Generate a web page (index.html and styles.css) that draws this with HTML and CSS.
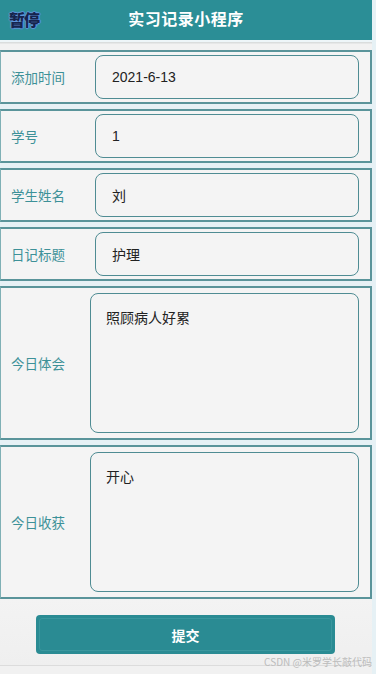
FILE: index.html
```html
<!DOCTYPE html>
<html lang="zh">
<head>
<meta charset="utf-8">
<title>实习记录小程序</title>
<link rel="stylesheet" href="styles.css">
</head>
<body>
<div class="app">
  <header class="header">
    <span class="pause">暂停</span>
    <h1 class="title">实习记录小程序</h1>
  </header>
  <div class="subbar"></div>
  <form class="form">
    <div class="row">
      <label class="label">添加时间</label>
      <div class="field">2021-6-13</div>
    </div>
    <div class="row">
      <label class="label">学号</label>
      <div class="field">1</div>
    </div>
    <div class="row">
      <label class="label">学生姓名</label>
      <div class="field">刘</div>
    </div>
    <div class="row">
      <label class="label">日记标题</label>
      <div class="field">护理</div>
    </div>
    <div class="row row-tall">
      <label class="label">今日体会</label>
      <div class="area">照顾病人好累</div>
    </div>
    <div class="row row-tall">
      <label class="label">今日收获</label>
      <div class="area">开心</div>
    </div>
    <div class="actions">
      <button type="button" class="submit"><span class="submit-inner">提交</span></button>
    </div>
  </form>
  <div class="footer">
    <span class="watermark">CSDN @米罗学长敲代码</span>
  </div>
</div>
</body>
</html>
```
FILE: styles.css
```css
html, body {
  margin: 0;
  padding: 0;
}
body {
  background: #e6f1f5;
  font-family: "Liberation Sans", "Noto Sans CJK SC", sans-serif;
  font-size: 14px;
  color: #222;
  width: 376px;
  height: 674px;
  overflow: hidden;
}
.app {
  width: 372px;
  display: flex;
  flex-direction: column;
}
.header {
  position: relative;
  height: 40px;
  background: #2b8e96;
  display: flex;
  align-items: center;
  justify-content: center;
}
.title {
  margin: 0 0 4px 0;
  font-family: "Noto Sans CJK SC", sans-serif;
  font-size: 16px;
  font-weight: 700;
  color: #fff;
  letter-spacing: 0.5px;
}
.pause {
  position: absolute;
  left: 9px;
  top: 7px;
  font-family: "Noto Sans CJK SC", sans-serif;
  font-size: 16px;
  font-weight: 900;
  color: #16244d;
  letter-spacing: -1px;
  text-shadow: 1px 0 1px #5f95de, -1px 0 1px #5f95de, 0 1px 1px #5f95de, 0 -1px 1px #5f95de;
}
.subbar {
  height: 8px;
  border-top: 2px solid #eef6f9;
  background: linear-gradient(#dadddd 0, #dadddd 1px, #f2f2f2 2px);
  background-color: #f2f2f2;
  margin: 0;
}
.form {
  display: flex;
  flex-direction: column;
  gap: 5px;
  margin: 0;
}
.row {
  box-sizing: border-box;
  height: 54px;
  background: #f4f4f4;
  border: 2px solid #5a949a;
  border-left: 1px solid #7fb0b5;
  display: flex;
  align-items: center;
}
.row-tall {
  height: 154px;
}
.label {
  width: 94px;
  padding-left: 10px;
  box-sizing: border-box;
  font-family: "Noto Sans CJK SC", sans-serif;
  font-size: 13.5px;
  color: #3d9198;
  flex: none;
}
.row-tall .label {
  width: 89px;
}
.field {
  box-sizing: border-box;
  width: 264px;
  height: 44px;
  border: 1.5px solid #4f8c93;
  border-radius: 8px;
  padding-left: 16px;
  display: flex;
  align-items: center;
  font-size: 14px;
  color: #222;
}
.area {
  box-sizing: border-box;
  width: 269px;
  height: 140px;
  border: 1.5px solid #4f8c93;
  border-radius: 8px;
  padding: 13px 15px;
  font-family: "Noto Sans CJK SC", sans-serif;
  font-size: 14px;
  color: #222;
}
.actions {
  height: 66px;
  margin-top: -5px;
  background: linear-gradient(#f3f3f3, #efefef);
  display: flex;
  align-items: flex-start;
  padding-top: 16px;
  box-sizing: border-box;
  padding-left: 36px;
}
.submit {
  width: 299px;
  height: 39px;
  border: none;
  border-radius: 4px;
  background: #2a8b93;
  padding: 3px;
  cursor: pointer;
}
.submit-inner {
  box-sizing: border-box;
  display: flex;
  align-items: center;
  justify-content: center;
  height: 100%;
  border: 1px solid #3a979e;
  border-radius: 3px;
  font-family: "Noto Sans CJK SC", sans-serif;
  font-size: 14px;
  font-weight: 700;
  color: #fff;
}
.footer {
  height: 10px;
  border-top: 1px solid #dcdcdc;
  position: relative;
  background: #f1f1f1;
}
.watermark {
  position: absolute;
  right: 0;
  top: -12px;
  font-family: "Noto Sans CJK SC", sans-serif;
  font-size: 10px;
  color: #bcbcbc;
  white-space: nowrap;
}
```
